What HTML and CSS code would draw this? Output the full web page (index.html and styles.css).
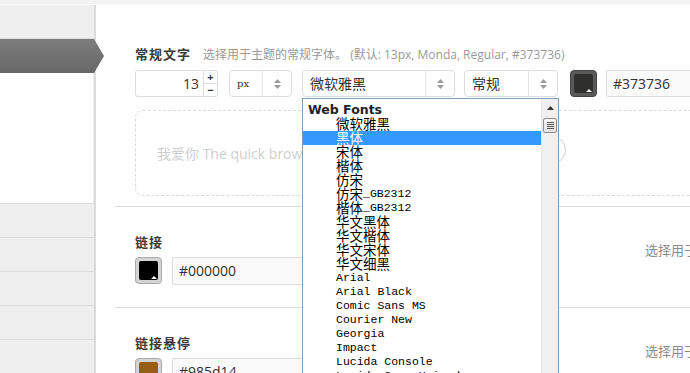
FILE: index.html
```html
<!DOCTYPE html>
<html lang="zh-CN">
<head>
  <meta charset="UTF-8" />
  <title>主题选项 - 字体</title>
  <link rel="stylesheet" href="styles.css">
</head>
<body>
  <div class="topbar"></div>
  <div class="layout">
    <aside class="sidebar">
      <div class="nav-item"></div>
      <div class="nav-item active"></div>
      <div class="nav-blank"></div>
      <div class="nav-item"></div>
      <div class="nav-item"></div>
      <div class="nav-item"></div>
      <div class="nav-item"></div>
      <div class="nav-item"></div>
    </aside>

    <main class="main">
      <!-- 常规文字 -->
      <section class="field">
        <div class="field-head">
          <h3>常规文字</h3>
          <span class="desc">选择用于主题的常规字体。 (默认: 13px, Monda, Regular, #373736)</span>
        </div>
        <div class="controls">
          <div class="num">
            <span class="num-val">13</span>
            <span class="num-spin"><i>+</i><i>&minus;</i></span>
          </div>
          <div class="select select-unit">
            <span class="select-val">px</span>
            <span class="select-arrow"><svg width="7" height="10" viewBox="0 0 7 10"><path d="M3.5 0L7 4H0Z M0 6H7L3.5 10Z" fill="#9a9a9a"/></svg></span>
          </div>
          <div class="select select-font">
            <span class="select-val">微软雅黑</span>
            <span class="select-arrow"><svg width="7" height="10" viewBox="0 0 7 10"><path d="M3.5 0L7 4H0Z M0 6H7L3.5 10Z" fill="#9a9a9a"/></svg></span>
          </div>
          <div class="select select-weight">
            <span class="select-val">常规</span>
            <span class="select-arrow"><svg width="7" height="10" viewBox="0 0 7 10"><path d="M3.5 0L7 4H0Z M0 6H7L3.5 10Z" fill="#9a9a9a"/></svg></span>
          </div>
          <div class="swatch swatch-dark"><span class="swatch-fill" style="background:#2f2f2e"></span></div>
          <div class="hex">#373736</div>
        </div>
        <div class="preview">
          <span class="preview-text">我爱你 The quick brown fox jumps over the lazy dog</span>
          <span class="preview-toggle"></span>
        </div>
      </section>

      <!-- 链接 -->
      <section class="field field-color">
        <div class="color-col">
          <h3>链接</h3>
          <div class="color-row">
            <div class="swatch"><span class="swatch-fill" style="background:#000000"></span></div>
            <div class="hex hex-wide">#000000</div>
          </div>
        </div>
        <span class="desc desc-side">选择用于链接的颜色。</span>
      </section>

      <!-- 链接悬停 -->
      <section class="field field-color">
        <div class="color-col">
          <h3>链接悬停</h3>
          <div class="color-row">
            <div class="swatch"><span class="swatch-fill" style="background:#985d14"></span></div>
            <div class="hex hex-wide">#985d14</div>
          </div>
        </div>
        <span class="desc desc-side">选择用于链接悬停的颜色。</span>
      </section>
    </main>
  </div>

  <!-- open font list -->
  <div class="dropdown">
    <ul class="options">
      <li class="group">Web Fonts</li>
      <li><span class="cjk">微软雅黑</span></li>
      <li class="selected"><span class="cjk">黑体</span></li>
      <li><span class="cjk">宋体</span></li>
      <li><span class="cjk">楷体</span></li>
      <li><span class="cjk">仿宋</span></li>
      <li><span class="cjk">仿宋</span>_GB2312</li>
      <li><span class="cjk">楷体</span>_GB2312</li>
      <li><span class="cjk">华文黑体</span></li>
      <li><span class="cjk">华文楷体</span></li>
      <li><span class="cjk">华文宋体</span></li>
      <li><span class="cjk">华文细黑</span></li>
      <li>Arial</li>
      <li>Arial Black</li>
      <li>Comic Sans MS</li>
      <li>Courier New</li>
      <li>Georgia</li>
      <li>Impact</li>
      <li>Lucida Console</li>
      <li>Lucida Sans Unicode</li>
    </ul>
    <div class="scrollbar">
      <span class="scroll-up"><svg width="7" height="4" viewBox="0 0 7 4"><path d="M3.5 0L7 4H0Z" fill="#333"/></svg></span>
      <span class="scroll-thumb"><i></i><i></i><i></i><i></i></span>
    </div>
  </div>
</body>
</html>
```

FILE: styles.css
```css
* {
  margin: 0;
  padding: 0;
  box-sizing: border-box;
}

body {
  width: 690px;
  height: 373px;
  overflow: hidden;
  position: relative;
  background: #fff;
  color: #333;
  font-family: "Open Sans", "Noto Sans CJK SC", sans-serif;
}

.topbar {
  height: 5px;
  background: #f3f3f3;
  border-bottom: 1px solid #fafafa;
}

.layout {
  display: flex;
  height: 368px;
}

/* sidebar */
.sidebar {
  width: 96px;
  flex: none;
  border-right: 2px solid #dcdcdc;
  display: flex;
  flex-direction: column;
}

.nav-item {
  height: 34px;
  flex: none;
  background: #efefef;
  border-bottom: 1px solid #dcdcdc;
}

.nav-item.active {
  position: relative;
  border-bottom: none;
  background: linear-gradient(#7d7d7d, #676767);
}

.nav-item.active::after {
  content: "";
  position: absolute;
  left: 100%;
  top: 0;
  width: 10px;
  height: 100%;
  background: linear-gradient(#7d7d7d, #676767);
  clip-path: polygon(0 0, 100% 50%, 0 100%);
}

.nav-blank {
  height: 131px;
  flex: none;
  background: #fff;
  border-bottom: 1px solid #dcdcdc;
  border-right: 1px solid #ececec;
}

/* main */
.main {
  flex: 1;
  min-width: 0;
  padding-left: 19px;
}

.field {
  padding: 39px 0 10px 20px;
  border-bottom: 1px solid #dedede;
}

.field-head {
  display: flex;
  align-items: baseline;
  height: 20px;
  line-height: 20px;
  white-space: nowrap;
}

h3 {
  font-size: 13px;
  font-weight: bold;
  color: #3a3a3a;
  line-height: 20px;
  letter-spacing: 1px;
}

.field-head h3 {
  margin-right: 12px;
}

.desc {
  font-size: 12px;
  color: #9a9a9a;
  white-space: nowrap;
}

.controls {
  display: flex;
  height: 27px;
  margin-top: 6px;
}

.controls > * {
  flex: none;
}

.num {
  width: 83px;
  margin-right: 11px;
  display: flex;
  border: 1px solid #ddd;
  border-radius: 3px;
}

.num-val {
  flex: 1;
  text-align: right;
  padding-right: 4px;
  font-size: 14px;
  line-height: 25px;
}

.num-spin {
  width: 14px;
  display: flex;
  flex-direction: column;
  border-left: 1px solid #ddd;
}

.num-spin i {
  flex: 1;
  font-style: normal;
  font-size: 11px;
  font-weight: bold;
  line-height: 12px;
  text-align: center;
  color: #333;
}

.num-spin i:first-child {
  border-bottom: 1px solid #ddd;
}

.select {
  display: flex;
  border: 1px solid #ddd;
  border-radius: 4px;
  background: #fff;
  margin-right: 10px;
}

.select-val {
  flex: 1;
  padding-left: 7px;
  font-size: 14px;
  line-height: 25px;
  color: #333;
  white-space: nowrap;
}

.select-arrow {
  width: 29px;
  border-left: 1px solid #e4e4e4;
  display: flex;
  align-items: center;
  justify-content: center;
}

.select-unit {
  width: 63px;
}

.select-unit .select-val {
  font-family: "DejaVu Serif", serif;
  font-size: 10px;
}

.select-font {
  width: 153px;
  margin-right: 9px;
}

.select-weight {
  width: 94px;
  margin-right: 12px;
}

.swatch {
  width: 27px;
  height: 27px;
  flex: none;
  padding: 3px;
  border: 1px solid #a9a9a9;
  border-radius: 4px;
  background: #d4d4d4;
  margin-right: 9px;
}

.swatch-dark {
  background: #5a5a5a;
  border-color: #444;
}

.swatch-fill {
  display: block;
  position: relative;
  height: 100%;
  border-radius: 2px;
}

.swatch-fill::after {
  content: "";
  position: absolute;
  right: 1px;
  bottom: 1px;
  border-left: 3px solid transparent;
  border-right: 3px solid transparent;
  border-bottom: 3px solid #fff;
}

.hex {
  width: 110px;
  flex: none;
  border: 1px solid #ddd;
  border-radius: 2px;
  background: #fafafa;
  padding-left: 6px;
  font-size: 14px;
  line-height: 25px;
  color: #333;
}

.preview {
  position: relative;
  height: 86px;
  margin-top: 13px;
  width: 600px;
  border: 1px dashed #dadada;
  border-radius: 8px;
  display: flex;
  align-items: center;
  padding-left: 21px;
}

.preview-text {
  font-size: 14px;
  color: #cfcfcf;
  white-space: nowrap;
}

.preview-toggle {
  position: absolute;
  left: 402px;
  top: 25px;
  width: 28px;
  height: 28px;
  border: 1px solid #cfcfcf;
  border-radius: 50%;
  background: #fff;
}

/* colour rows */
.field-color {
  display: flex;
  padding: 25px 0 22px 20px;
}

.color-col {
  width: 510px;
  flex: none;
}

.color-row {
  display: flex;
  margin-top: 5px;
}

.color-row .swatch {
  margin-right: 10px;
}

.hex-wide {
  width: 200px;
  height: 28px;
  line-height: 26px;
}

.desc-side {
  align-self: flex-start;
  margin-top: 8px;
  font-size: 13px;
  line-height: 20px;
  color: #8c8c8c;
}

/* open dropdown */
.dropdown {
  position: absolute;
  left: 302px;
  top: 98px;
  width: 257px;
  height: 290px;
  display: flex;
  background: #fff;
  border: 1px solid #7f9db9;
}

.options {
  flex: 1;
  list-style: none;
  padding-top: 4px;
  font-family: "Liberation Mono", "Noto Sans CJK SC", monospace;
  font-size: 11.5px;
  color: #000;
}

.options li {
  height: 14px;
  line-height: 14px;
  padding-left: 33px;
  white-space: nowrap;
}

.options .cjk {
  display: inline-block;
  vertical-align: top;
  height: 14px;
  font-family: "Noto Sans CJK SC", sans-serif;
  font-size: 13.5px;
  line-height: 13px;
}

.options li.group {
  padding-left: 5px;
  font-family: "DejaVu Sans", sans-serif;
  font-weight: bold;
  font-size: 12.5px;
  color: #222;
}

.options li.selected {
  background: #3399ff;
  color: #fff;
}

.scrollbar {
  width: 17px;
  flex: none;
  background: #f0f0f0;
  border-left: 1px solid #e6e6e6;
  display: flex;
  flex-direction: column;
  align-items: center;
}

.scroll-up {
  height: 17px;
  display: flex;
  align-items: center;
  justify-content: center;
}

.scroll-thumb {
  width: 14px;
  height: 15px;
  margin-top: 2px;
  border: 1px solid #8d8d8d;
  border-radius: 2px;
  background: linear-gradient(#f6f6f6, #e2e2e2);
  display: flex;
  flex-direction: column;
  justify-content: center;
  align-items: center;
  gap: 1px;
}

.scroll-thumb i {
  display: block;
  width: 7px;
  height: 1px;
  background: #555;
}
```
